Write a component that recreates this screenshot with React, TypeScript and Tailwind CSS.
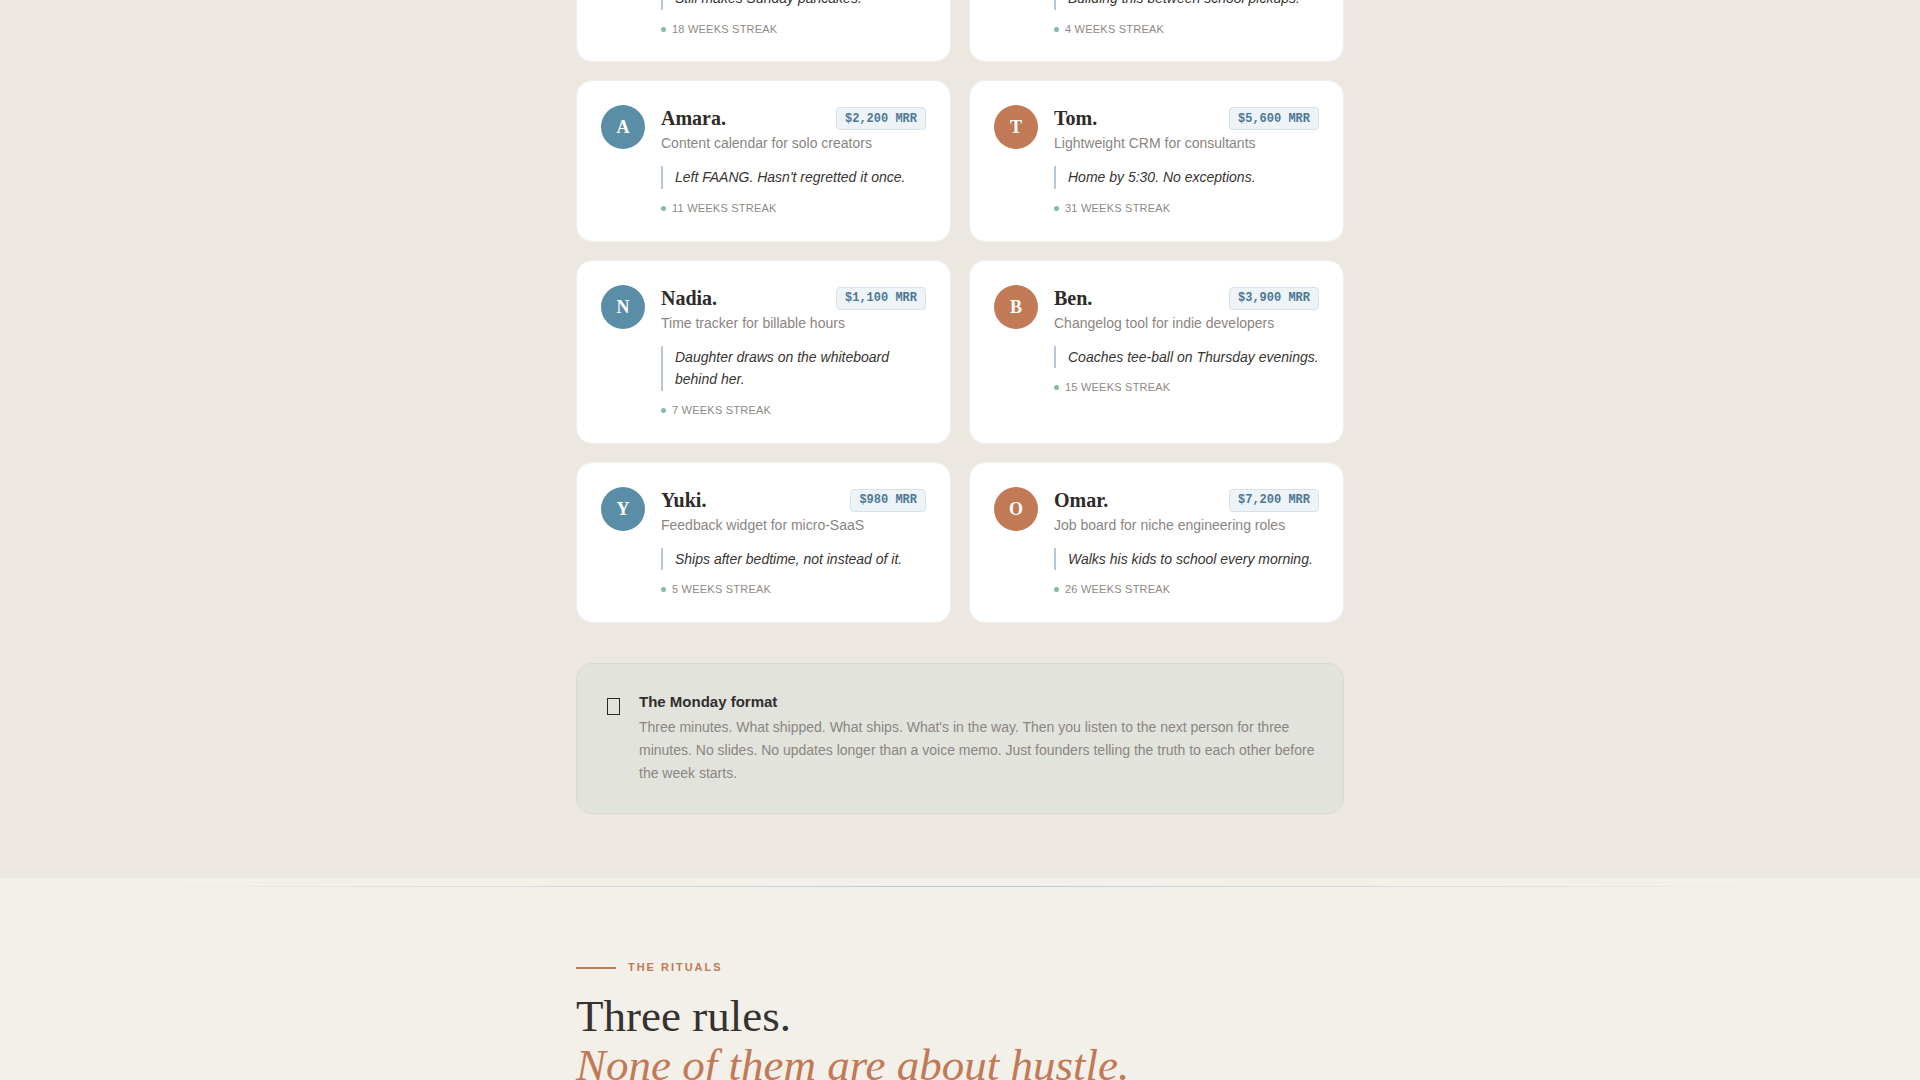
import type { ReactNode } from 'react'

interface Founder {
  initial: string
  name: string
  product: string
  mrr: string
  quote: string
  weeks: number
  tone: 'blue' | 'clay'
}

const founders: Founder[] = [
  {
    initial: 'D',
    name: 'Daniel.',
    product: 'Invoice reminders for freelancers',
    mrr: '$3,400 MRR',
    quote: 'Still makes Sunday pancakes.',
    weeks: 18,
    tone: 'blue',
  },
  {
    initial: 'P',
    name: 'Priya.',
    product: 'Booking pages for tutors',
    mrr: '$1,800 MRR',
    quote: 'Building this between school pickups.',
    weeks: 4,
    tone: 'clay',
  },
  {
    initial: 'A',
    name: 'Amara.',
    product: 'Content calendar for solo creators',
    mrr: '$2,200 MRR',
    quote: "Left FAANG. Hasn't regretted it once.",
    weeks: 11,
    tone: 'blue',
  },
  {
    initial: 'T',
    name: 'Tom.',
    product: 'Lightweight CRM for consultants',
    mrr: '$5,600 MRR',
    quote: 'Home by 5:30. No exceptions.',
    weeks: 31,
    tone: 'clay',
  },
  {
    initial: 'N',
    name: 'Nadia.',
    product: 'Time tracker for billable hours',
    mrr: '$1,100 MRR',
    quote: 'Daughter draws on the whiteboard behind her.',
    weeks: 7,
    tone: 'blue',
  },
  {
    initial: 'B',
    name: 'Ben.',
    product: 'Changelog tool for indie developers',
    mrr: '$3,900 MRR',
    quote: 'Coaches tee-ball on Thursday evenings.',
    weeks: 15,
    tone: 'clay',
  },
  {
    initial: 'Y',
    name: 'Yuki.',
    product: 'Feedback widget for micro-SaaS',
    mrr: '$980 MRR',
    quote: 'Ships after bedtime, not instead of it.',
    weeks: 5,
    tone: 'blue',
  },
  {
    initial: 'O',
    name: 'Omar.',
    product: 'Job board for niche engineering roles',
    mrr: '$7,200 MRR',
    quote: 'Walks his kids to school every morning.',
    weeks: 26,
    tone: 'clay',
  },
]

const sans = "font-['Liberation_Sans',Arial,sans-serif]"
const serif = "font-['Liberation_Serif','Times_New_Roman',serif]"

const FounderCard = ({ f }: { f: Founder }) => (
  <div className="bg-white rounded-2xl border border-[#f1eee9] p-6 flex gap-4">
    <div
      className={`w-11 h-11 shrink-0 rounded-full flex items-center justify-center text-white text-lg font-bold ${serif} ${
        f.tone === 'blue' ? 'bg-[#5a8ea7]' : 'bg-[#c27955]'
      }`}
    >
      {f.initial}
    </div>
    <div className="flex-1 min-w-0">
      <div className="flex items-start justify-between gap-3">
        <h3 className={`text-xl leading-[26px] font-bold text-[#2e2b28] ${serif}`}>{f.name}</h3>
        <span className="mt-0.5 h-[23px] px-2 flex items-center rounded border border-[#d6e1e9] bg-[#eef3f7] text-[12px] font-bold text-[#4c7895] font-['Liberation_Mono','Courier_New',monospace]">
          {f.mrr}
        </span>
      </div>
      <p className="mt-[2px] text-sm leading-5 text-[#8a8581]">{f.product}</p>
      <blockquote className="mt-[13px] border-l-2 border-[#bac8d3] pl-3 text-sm leading-[1.625] italic text-[#383532]">
        {f.quote}
      </blockquote>
      <div className="mt-[11px] flex items-center gap-1.5 text-[11px] uppercase tracking-[0.02em] text-[#8e8984]">
        <span className="w-[5px] h-[5px] rounded-full bg-[#80bda2]" />
        {f.weeks} weeks streak
      </div>
    </div>
  </div>
)

const Callout = ({ title, children }: { title: string; children: ReactNode }) => (
  <div className="mt-10 flex rounded-2xl border border-[#d9d9d2] bg-[#e3e3dd] py-7 pl-[30px] pr-6">
    <span className="mt-[6px] mr-[19px] w-[13px] h-[17px] shrink-0 border-[1.5px] border-[#2b2926]" />
    <div>
      <h4 className="text-[15px] leading-5 font-bold text-[#312e2b]">{title}</h4>
      <p className="mt-1 text-sm leading-[1.66] text-[#8a8581]">{children}</p>
    </div>
  </div>
)

export default function App() {
  return (
    <div className={`min-h-screen overflow-hidden bg-[#f3f0ea] ${sans}`}>
      <section className="bg-[#ece8e1] pb-16">
        <div className="max-w-3xl mx-auto -mt-[99px]">
          <div className="grid grid-cols-2 gap-[18px]">
            {founders.map((f) => (
              <FounderCard key={f.name} f={f} />
            ))}
          </div>
          <Callout title="The Monday format">
            Three minutes. What shipped. What ships. What's in the way. Then you listen to the next
            person for three minutes. No slides. No updates longer than a voice memo. Just founders
            telling the truth to each other before the week starts.
          </Callout>
        </div>
      </section>

      <section className="pt-2 pb-24">
        <div className="h-px bg-linear-to-r from-transparent via-[#b9c8d4] to-transparent mx-[5%]" />
        <div className="max-w-3xl mx-auto pt-[72px]">
          <div className="flex items-center gap-3">
            <span className="w-10 h-[2px] bg-[#c27955]" />
            <span className="text-[11px] font-bold uppercase tracking-[0.18em] text-[#c27955]">
              The rituals
            </span>
          </div>
          <h2 className={`mt-[16px] text-[45px] leading-[1.1] text-[#35322f] ${serif}`}>
            Three rules.
            <br />
            <em className="text-[#c27955]">None of them are about hustle.</em>
          </h2>
        </div>
      </section>
    </div>
  )
}
